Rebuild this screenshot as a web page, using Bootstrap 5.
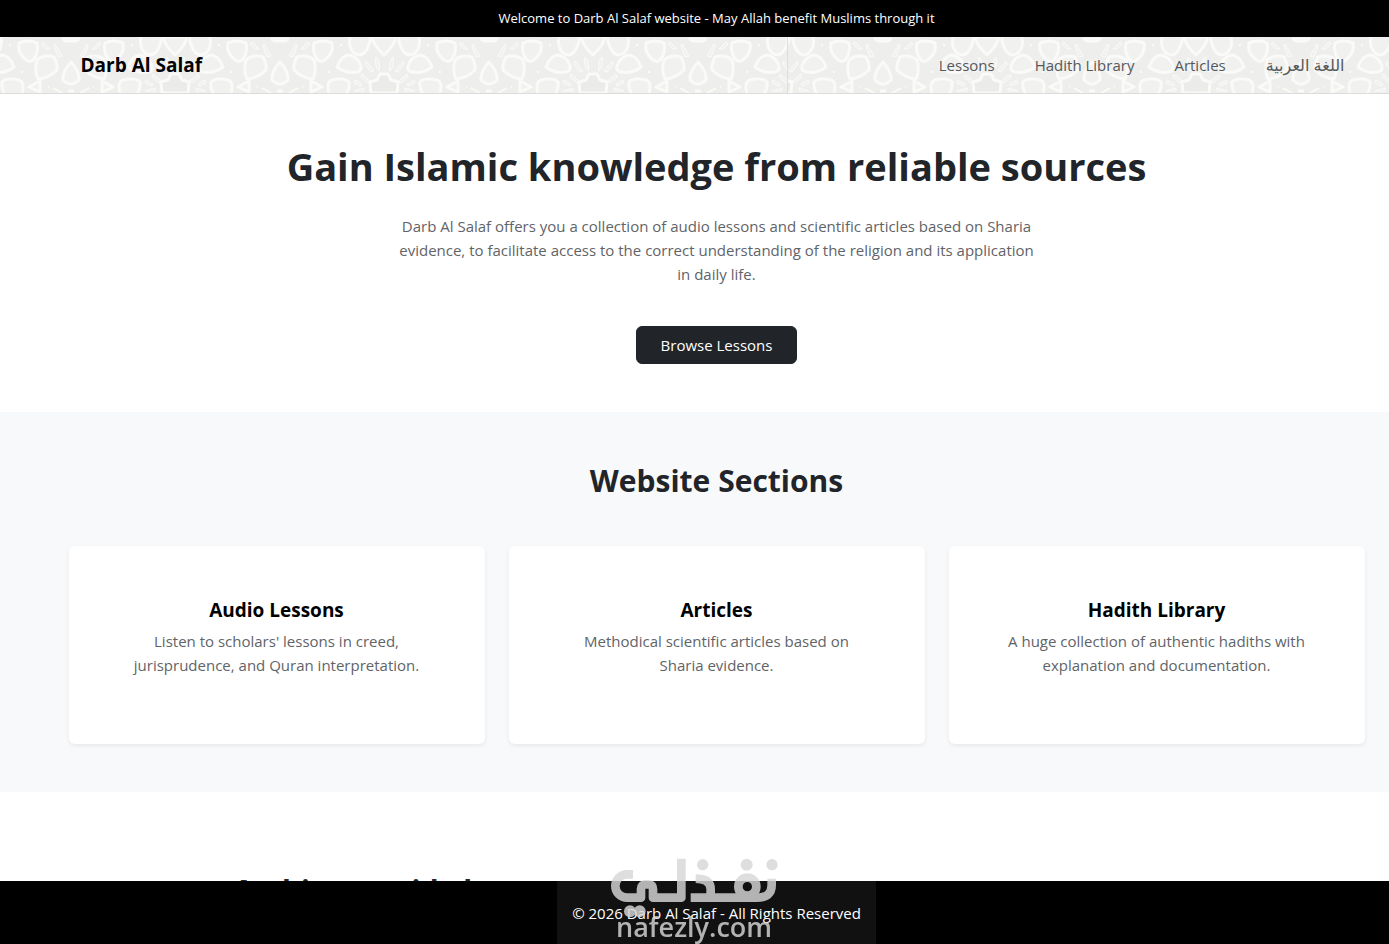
<!DOCTYPE html>
<html lang="en">
<head>
<meta charset="utf-8">
<meta name="viewport" content="width=device-width, initial-scale=1">
<title>Darb Al Salaf</title>
<link href="https://cdn.jsdelivr.net/npm/bootstrap@5.3.0/dist/css/bootstrap.min.css" rel="stylesheet">
<style>
  body { font-family: "Open Sans", "DejaVu Sans", sans-serif; font-size: 15px; line-height: 24px; color: #212529; }
  .page-pad { padding-left: 44px; }
  .wrap { max-width: 1320px; }
  .announce { font-size: 13px; line-height: 21px; }
  .site-head { height: 57px; background: #eeeeed; border-bottom: 1px solid #dcdcdc; }
  .head-art { position: absolute; inset: 0; width: 100%; height: 100%; }
  .site-head .navbar-brand { font-size: 19px; color: #000; }
  .site-head .navbar-nav { --bs-navbar-nav-link-padding-x: 20px; }
  .site-head .nav-link { color: #55585b; }
  .site-head .nav-link:lang(ar) { font-size: 16px; }
  .hero-title { font-size: 38px; line-height: 48px; margin-bottom: 24px; }
  .hero-text { max-width: 650px; margin-bottom: 40px; }
  .soft { color: #5f6468; }
  .btn-browse { font-size: 15px; line-height: 24px; padding: 6px 24px; border-radius: 6px; }
  .zone { background: #f8f9fb; }
  .zone-title { font-size: 30px; line-height: 42px; margin-bottom: 44px; }
  .topic { border: 0; border-radius: 6px; padding: 52px 56px 67px; }
  .topic-title { font-size: 19px; line-height: 24px; color: #000; margin-bottom: 7px; }
  .about { padding-top: 78px; padding-bottom: 96px; }
  .about-title { font-size: 29px; line-height: 40px; }
  .site-foot { height: 63px; }
  .foot-note { background: #111; padding: 20px 15px; }
  .stamp { position: fixed; left: 50%; bottom: 0; width: 175px; height: 92px; margin-left: -90px; z-index: 1040; opacity: .82; pointer-events: none; }
  .stamp text { font-family: "Open Sans", sans-serif; font-size: 27px; font-weight: 600; }
</style>
</head>
<body>
<div class="announce bg-black text-white text-center py-2 page-pad">Welcome to Darb Al Salaf website - May Allah benefit Muslims through it</div>

<header class="site-head position-relative page-pad">
  <svg class="head-art" aria-hidden="true">
    <defs>
      <g id="half" fill="#f1f1f0" stroke="#fafaf8" stroke-width="3" stroke-linejoin="round">
        <path d="M17 20Q27 17 34 23Q37 34 33 42Q22 41 14 33Q13 28 17 20Z"/>
        <path d="M34 6Q42 2 52 6Q54 15 46 22Q41 27 37 22Q32 14 34 6Z"/>
        <path d="M57 30Q61 19 69 18Q78 20 81 29Q82 34 77 35Q66 37 57 30Z"/>
        <path d="M70 0Q68 10 74 16Q82 21 87 12Q91 4 90 0"/>
        <path d="M49 57Q46 45 52 43Q65 40 69 45Q70 51 66 57"/>
        <path d="M31 44L42 50L31 55Z"/>
        <path d="M9 19L16 7L17 9L13 20Z M21 12L28 5L30 7L25 12Z" stroke-width="1"/>
        <path d="M82 37L90 44L88 46L81 40Z M86 24L94 34L91 35L85 27Z M96 20Q101 26 99 34Q94 28 96 20Z M75 43L82 47L81 49L74 46Z M74 54L84 51L84 54Z" stroke-width="1"/>
        <path d="M9 56L18 51M60 8h2M48 35h2M22 50h1" stroke-width="2"/>
      </g>
      <pattern id="cell" width="209" height="56" patternUnits="userSpaceOnUse">
        <use href="#half" x="105"/>
        <g transform="translate(105 0) scale(-1 1)"><use href="#half"/></g>
        <g fill="#f1f1f0" stroke="#fafaf8" stroke-width="3" stroke-linejoin="round">
          <path d="M105 25Q114 35 113 43Q105 51 97 43Q96 35 105 25Z"/>
          <path d="M97 2H113L110 4H100Z" fill="#fafaf8"/>
          <path d="M0 18Q10 9 12 0H-12Q-10 9 0 18ZM209 18Q199 9 197 0H221Q219 9 209 18Z"/>
          <path d="M-13 56L-14 45L-7 43L-4 37H4L7 43L14 45L13 56ZM196 56L195 45L202 43L205 37H213L216 43V56Z" fill="#ebebea"/>
          <path d="M102 54h6"/>
        </g>
      </pattern>
      <pattern id="cellLeft" href="#cell" patternTransform="translate(-34 0)"/>
      <pattern id="cellRight" href="#cell" patternTransform="translate(778 0)"/>
    </defs>
    <rect width="787" height="56" fill="url(#cellLeft)"/>
    <rect x="787" width="100%" height="56" fill="url(#cellRight)"/>
    <path d="M787.500 0V56" stroke="#dededd"/>
  </svg>
  <nav class="navbar navbar-expand p-0 h-100">
    <div class="container-fluid wrap ps-4">
      <a class="navbar-brand fw-bold py-0" href="#">Darb Al Salaf</a>
      <ul class="navbar-nav ms-auto">
        <li class="nav-item"><a class="nav-link" href="#lessons">Lessons</a></li>
        <li class="nav-item"><a class="nav-link" href="#hadith">Hadith Library</a></li>
        <li class="nav-item"><a class="nav-link" href="#articles">Articles</a></li>
        <li class="nav-item"><a class="nav-link" href="#" lang="ar" dir="rtl">اللغة العربية</a></li>
      </ul>
    </div>
  </nav>
</header>

<main>
  <section class="page-pad text-center py-5">
    <div class="container-fluid wrap">
      <h1 class="hero-title fw-bold">Gain Islamic knowledge from reliable sources</h1>
      <p class="hero-text soft mx-auto">Darb Al Salaf offers you a collection of audio lessons and scientific articles based on Sharia evidence, to facilitate access to the correct understanding of the religion and its application in daily life.</p>
      <a class="btn btn-dark btn-browse" href="#lessons">Browse Lessons</a>
    </div>
  </section>

  <section class="zone page-pad text-center py-5">
    <div class="container-fluid wrap">
      <h2 class="zone-title fw-bold">Website Sections</h2>
      <div class="row row-cols-3">
        <div class="col" id="lessons">
          <article class="card topic shadow-sm h-100">
            <h3 class="topic-title fw-bold">Audio Lessons</h3>
            <p class="soft mb-0">Listen to scholars' lessons in creed, jurisprudence, and Quran interpretation.</p>
          </article>
        </div>
        <div class="col" id="articles">
          <article class="card topic shadow-sm h-100">
            <h3 class="topic-title fw-bold">Articles</h3>
            <p class="soft mb-0">Methodical scientific articles based on Sharia evidence.</p>
          </article>
        </div>
        <div class="col" id="hadith">
          <article class="card topic shadow-sm h-100">
            <h3 class="topic-title fw-bold">Hadith Library</h3>
            <p class="soft mb-0">A huge collection of authentic hadiths with explanation and documentation.</p>
          </article>
        </div>
      </div>
    </div>
  </section>

  <section class="page-pad about">
    <div class="container-fluid wrap">
      <div class="row">
        <div class="col-6 text-center"><h2 class="about-title fw-bold">Archive a guide by us</h2></div>
      </div>
    </div>
  </section>
</main>

<footer class="site-foot fixed-bottom bg-black text-white d-flex justify-content-center page-pad">
  <div class="foot-note">© 2026 Darb Al Salaf - All Rights Reserved</div>
</footer>

<svg class="stamp" viewBox="0 0 175 92" role="img" aria-label="nafezly.com">
  <g transform="scale(.33333)" fill="none" stroke="#d7d7d7" stroke-width="26" stroke-linejoin="round">
    <path d="M84 67H66A35 35 0 0 0 66 137H108V111Q108 97 122 97H131Q144 97 144 111V137H229V20"/>
    <path d="M272 80Q317 80 317 112V137H257M310 137H455Q500 137 500 100V80"/>
    <circle cx="427" cy="104" r="27"/>
    <g fill="#d7d7d7" stroke="none">
      <circle cx="293" cy="38" r="17"/><circle cx="425" cy="38" r="18"/><circle cx="501" cy="38" r="17"/>
      <circle cx="75" cy="178" r="18"/><circle cx="104" cy="178" r="18"/>
    </g>
  </g>
  <text x="11" y="85" fill="#d7d7d7">nafezly.com</text>
</svg>
<script src="https://cdn.jsdelivr.net/npm/bootstrap@5.3.0/dist/js/bootstrap.bundle.min.js"></script>
</body>
</html>
